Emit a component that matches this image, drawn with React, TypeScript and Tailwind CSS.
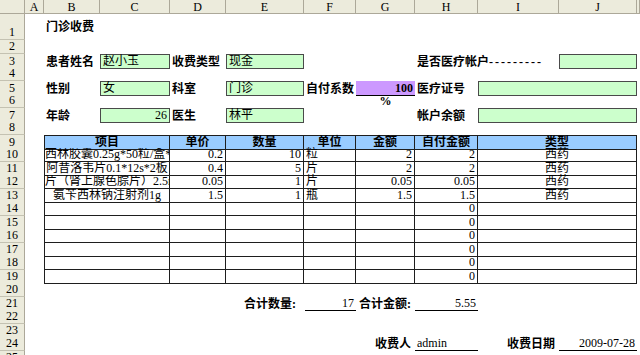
import type { ReactNode } from 'react'

type Cell = { span?: number; text?: ReactNode; cls?: string }

// column widths: row header, A..J, then a sliver of K
const GRID = 'grid grid-cols-[25px_19px_56px_70px_56px_78px_52px_59px_63px_81px_78px_3px]'

const L = 'justify-start pl-[2px]'
const R = 'justify-end pr-[2px]'
const C = 'justify-center'
const B = 'font-bold'
const GREEN = 'bg-[#ccffcc] border border-[#4a4a4a]'
const TD = 'border-r border-b border-[#1e1e1e]'
const TH = 'bg-[#99ccff] border-r border-b border-t border-[#1e1e1e] font-bold justify-center'
const UL = 'border-b border-black'

function spanCls(span?: number) {
  if (span === 2) return 'col-span-2'
  return ''
}

function Row({ n, h = 'h-[13.5px]', cells = [] }: { n: number; h?: string; cells?: Cell[] }) {
  const filled = [...cells]
  let used = filled.reduce((s, c) => s + (c.span ?? 1), 0)
  while (used < 11) {
    filled.push({})
    used++
  }
  return (
    <div className={`${GRID} ${h}`}>
      <div className="flex items-end justify-center bg-[#ecebdc] border-r border-b border-r-[#aca899] border-b-[#c4c2b2] text-[12px] leading-[13px]">
        {n}
      </div>
      {filled.map((c, i) => (
        <div
          key={i}
          className={`flex items-end whitespace-nowrap text-[12px] leading-[13px] ${spanCls(c.span)} ${c.cls ?? L}`}
        >
          {c.text}
        </div>
      ))}
    </div>
  )
}

const LETTERS = ['A', 'B', 'C', 'D', 'E', 'F', 'G', 'H', 'I', 'J', '']

const items: [string, string, string, string, string, string, string, boolean][] = [
  ['西林胶囊0.25g*50粒/盒*40', '0.2', '10', '粒', '2', '2', '西药', true],
  ['阿昔洛韦片0.1*12s*2板', '0.4', '5', '片', '2', '2', '西药', false],
  ['片（肾上腺色腙片）2.5mg', '0.05', '1', '片', '0.05', '0.05', '西药', true],
  ['氨苄西林钠注射剂1g', '1.5', '1', '瓶', '1.5', '1.5', '西药', false],
  ['', '', '', '', '', '0', '', false],
  ['', '', '', '', '', '0', '', false],
  ['', '', '', '', '', '0', '', false],
  ['', '', '', '', '', '0', '', false],
  ['', '', '', '', '', '0', '', false],
  ['', '', '', '', '', '0', '', false],
]

export default function App() {
  return (
    <div className="w-[640px] h-[355px] overflow-hidden bg-white text-black font-['Liberation_Serif','Noto_Sans_CJK_SC',serif]">
      {/* column headers */}
      <div className={`${GRID} h-[14px]`}>
        <div className="bg-[#ecebdc] border-r border-b border-[#aca899]" />
        {LETTERS.map((l, i) => (
          <div
            key={i}
            className="flex items-center justify-center bg-[#ecebdc] border-r border-b border-[#aca899] text-[12px] leading-none"
          >
            {l}
          </div>
        ))}
      </div>

      <Row n={1} h="h-[26px]" cells={[{}, { text: '门诊收费', cls: `${L} ${B} !items-center` }]} />
      <Row n={2} />
      <Row
        n={3}
        cells={[
          {},
          { text: '患者姓名', cls: `${L} ${B}` },
          { text: '赵小玉', cls: `${L} ${GREEN}` },
          { text: '收费类型', cls: `${L} ${B}` },
          { text: '现金', cls: `${L} ${GREEN}` },
          {},
          {},
          {
            text: (
              <>
                是否医疗帐户<span className="tracking-[2px]">---------</span>
              </>
            ),
            cls: `${L} ${B}`,
          },
          {},
          { cls: GREEN },
        ]}
      />
      <Row n={4} />
      <Row
        n={5}
        cells={[
          {},
          { text: '性别', cls: `${L} ${B}` },
          { text: '女', cls: `${L} ${GREEN}` },
          { text: '科室', cls: `${L} ${B}` },
          { text: '门诊', cls: `${L} ${GREEN}` },
          { text: '自付系数', cls: `${L} ${B}` },
          { text: '100', cls: `${R} ${B} bg-[#cc99ff] border-b border-black` },
          { text: '医疗证号', cls: `${L} ${B}` },
          { span: 2, cls: GREEN },
        ]}
      />
      <Row n={6} cells={[{}, {}, {}, {}, {}, {}, { text: '%', cls: `${C} ${B}` }]} />
      <Row
        n={7}
        cells={[
          {},
          { text: '年龄', cls: `${L} ${B}` },
          { text: '26', cls: `${R} ${GREEN}` },
          { text: '医生', cls: `${L} ${B}` },
          { text: '林平', cls: `${L} ${GREEN}` },
          {},
          {},
          { text: '帐户余额', cls: `${L} ${B}` },
          { span: 2, cls: GREEN },
        ]}
      />
      <Row n={8} />
      <Row
        n={9}
        cells={[
          {},
          { span: 2, text: '项目', cls: `${TH} border-l` },
          { text: '单价', cls: TH },
          { text: '数量', cls: TH },
          { text: '单位', cls: TH },
          { text: '金额', cls: TH },
          { text: '自付金额', cls: TH },
          { span: 2, text: '类型', cls: TH },
        ]}
      />
      {items.map(([name, price, qty, unit, amt, self, kind, clip], i) => (
        <Row
          key={i}
          n={10 + i}
          cells={[
            {},
            {
              span: 2,
              text: name,
              cls: `${TD} border-l overflow-hidden ${clip ? 'justify-start' : 'justify-center'}`,
            },
            { text: price, cls: `${TD} ${R}` },
            { text: qty, cls: `${TD} ${R}` },
            { text: unit, cls: `${TD} ${L} pl-[1px]` },
            { text: amt, cls: `${TD} ${R}` },
            { text: self, cls: `${TD} ${R}` },
            { span: 2, text: kind, cls: `${TD} ${C}` },
          ]}
        />
      ))}
      <Row n={20} />
      <Row
        n={21}
        cells={[
          {},
          {},
          {},
          {},
          { text: '合计数量:', cls: `justify-end pr-[8px] ${B}` },
          { text: '17', cls: `${R} ${UL} ml-[1px]` },
          { text: '合计金额:', cls: `justify-end pr-[4px] ${B}` },
          { text: '5.55', cls: `${R} ${UL}` },
        ]}
      />
      <Row n={22} />
      <Row n={23} />
      <Row
        n={24}
        cells={[
          {},
          {},
          {},
          {},
          {},
          {},
          { text: '收费人', cls: `${R} ${B} pr-[4px]` },
          { text: 'admin', cls: `${L} ${UL}` },
          { text: '收费日期', cls: `${R} ${B} pr-[4px]` },
          { text: '2009-07-28', cls: `${R} ${UL}` },
        ]}
      />
      <Row n={25} />
    </div>
  )
}
